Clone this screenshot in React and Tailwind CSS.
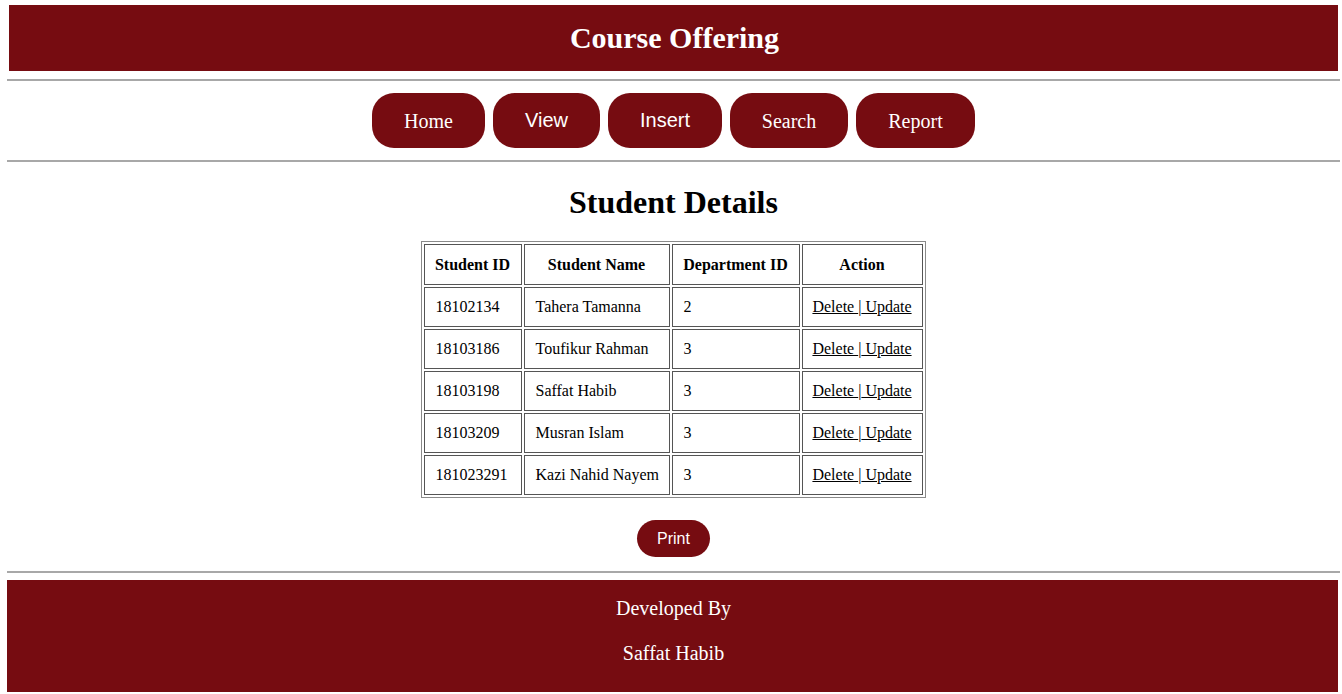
import React from "react";

const rows = [
  ["18102134", "Tahera Tamanna", "2"],
  ["18103186", "Toufikur Rahman", "3"],
  ["18103198", "Saffat Habib", "3"],
  ["18103209", "Musran Islam", "3"],
  ["181023291", "Kazi Nahid Nayem", "3"],
];

const navBtn =
  "h-[55px] rounded-[22px] bg-[#760c11] text-white text-[20px] flex items-center justify-center";

export default function App() {
  return (
    <div className="relative min-h-[694px] bg-white font-['Liberation_Serif',serif] text-black">
      <div className="ml-[9px] mr-[4px] mt-[5px] h-[66px] bg-[#760c11] flex items-center justify-center pl-[2px]">
        <h1 className="text-white text-[30px] font-bold leading-none">Course Offering</h1>
      </div>
      <div className="ml-[7px] mr-[2px] mt-[8px] border-t-2 border-[#a8a8a8]" />
      <nav className="mt-[12px] flex justify-center gap-[8px] pl-[5px]">
        <a className={navBtn + " w-[113px]"}>Home</a>
        <a className={navBtn + " w-[107px] font-['Liberation_Sans',sans-serif] pb-[2px]"}>View</a>
        <a className={navBtn + " w-[114px] font-['Liberation_Sans',sans-serif] pb-[2px]"}>Insert</a>
        <a className={navBtn + " w-[118px]"}>Search</a>
        <a className={navBtn + " w-[119px]"}>Report</a>
      </nav>
      <div className="ml-[7px] mr-[2px] mt-[12px] border-t-2 border-[#a8a8a8]" />
      <h2 className="mt-[22px] h-[36px] pl-[5px] text-center text-[32px] font-bold leading-[36px]">
        Student Details
      </h2>
      <div className="mt-[21px] flex justify-center pl-[4px]">
        <table className="border-separate border-spacing-[2px] border border-[#8a8a8a] text-[16px]">
          <thead>
            <tr className="h-[41px]">
              <th className="w-[98px] border border-[#555] font-bold text-center px-[8px]">Student ID</th>
              <th className="w-[146px] border border-[#555] font-bold text-center">Student Name</th>
              <th className="w-[128px] border border-[#555] font-bold text-center">Department ID</th>
              <th className="w-[121px] border border-[#555] font-bold text-center">Action</th>
            </tr>
          </thead>
          <tbody>
            {rows.map((r) => (
              <tr key={r[0]} className="h-[40px]">
                <td className="border border-[#555] pl-[11px]">{r[0]}</td>
                <td className="border border-[#555] pl-[11px]">{r[1]}</td>
                <td className="border border-[#555] pl-[11px]">{r[2]}</td>
                <td className="border border-[#555] text-center">
                  <a className="underline">Delete </a>|<a className="underline"> Update</a>
                </td>
              </tr>
            ))}
          </tbody>
        </table>
      </div>
      <div className="mt-[22px] flex justify-center pl-[5px]">
        <button className="h-[37px] w-[73px] rounded-[19px] bg-[#760c11] text-white text-[16px] font-['Liberation_Sans',sans-serif]">
          Print
        </button>
      </div>
      <div className="ml-[7px] mr-[2px] mt-[14px] border-t-2 border-[#a8a8a8]" />
      <footer className="ml-[7px] mr-[4px] mt-[7px] h-[112px] bg-[#760c11] text-white text-[20px] flex flex-col items-center pt-[15px] pl-[2px]">
        <p className="leading-[26px]">Developed By</p>
        <p className="mt-[19px] leading-[26px]">Saffat Habib</p>
      </footer>
      <div className="absolute bottom-0 left-0 right-0 h-[2px] bg-[#222]">
        <div className="absolute left-[627px] w-[36px] h-[2px] bg-[#666]" />
      </div>
    </div>
  );
}
